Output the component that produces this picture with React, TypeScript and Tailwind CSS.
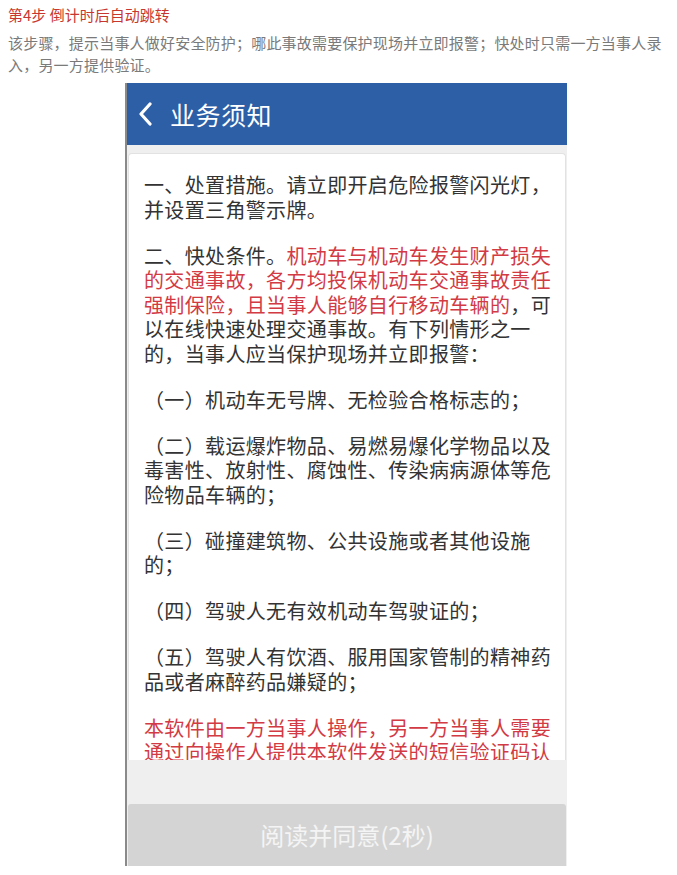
const cjk = { fontFamily: '"Noto Sans CJK SC", "Noto Sans", sans-serif' };

function Line({ children, red }: { children: React.ReactNode; red?: boolean }) {
  return <span className={red ? "text-[#d23a44]" : ""}>{children}</span>;
}

function Para({ lines }: { lines: React.ReactNode[] }) {
  return (
    <div className="mb-[21.5px]">
      {lines.map((l, i) => (
        <div key={i} className="whitespace-nowrap">
          {l}
        </div>
      ))}
    </div>
  );
}

export default function App() {
  return (
    <div className="min-h-[875px] w-[677px] bg-white" style={cjk}>
      <div className="px-2 pt-[4px]">
        <div className="text-[15px] leading-[22px] text-[#c8372f]">第4步 倒计时后自动跳转</div>
        <p className="mt-[6px] whitespace-nowrap text-[15px] leading-[22px] tracking-[0.2px] text-[#7a7a7a]">
          该步骤，提示当事人做好安全防护；哪此事故需要保护现场并立即报警；快处时只需一方当事人录
          <br />
          入，另一方提供验证。
        </p>
      </div>

      <div className="ml-[125px] mt-[7px] flex h-[783px] w-[442px] flex-col border-l-2 border-[#8a8a8a] bg-[#efefef]">
        <div className="flex h-[62px] shrink-0 items-center bg-[#2d5fa7] text-white">
          <svg width="16" height="24" viewBox="0 0 16 24" className="ml-[10px]">
            <path d="M13 2 L4 12 L13 22" fill="none" stroke="white" strokeWidth="3.2" strokeLinecap="round" strokeLinejoin="round" />
          </svg>
          <span className="ml-[17px] text-[25px] leading-none tracking-[0.5px]">业务须知</span>
        </div>

        <div className="mx-[1px] mt-[8px] h-[607px] shrink-0 overflow-hidden rounded-t-[4px] border border-b-0 border-[#e2e2e2] bg-white px-[15px] pt-[19px] text-[20px] leading-[24.5px] text-[#333333] tracking-[0.35px]">
          <Para lines={["一、处置措施。请立即开启危险报警闪光灯，", "并设置三角警示牌。"]} />
          <Para
            lines={[
              <>
                二、快处条件。<Line red>机动车与机动车发生财产损失</Line>
              </>,
              <Line red>的交通事故，各方均投保机动车交通事故责任</Line>,
              <>
                <Line red>强制保险，且当事人能够自行移动车辆的</Line>，可
              </>,
              "以在线快速处理交通事故。有下列情形之一",
              "的，当事人应当保护现场并立即报警：",
            ]}
          />
          <Para lines={["（一）机动车无号牌、无检验合格标志的；"]} />
          <Para
            lines={[
              "（二）载运爆炸物品、易燃易爆化学物品以及",
              "毒害性、放射性、腐蚀性、传染病病源体等危",
              "险物品车辆的；",
            ]}
          />
          <Para lines={["（三）碰撞建筑物、公共设施或者其他设施", "的；"]} />
          <Para lines={["（四）驾驶人无有效机动车驾驶证的；"]} />
          <Para lines={["（五）驾驶人有饮酒、服用国家管制的精神药", "品或者麻醉药品嫌疑的；"]} />
          <Para
            lines={[
              <Line red>本软件由一方当事人操作，另一方当事人需要</Line>,
              <Line red>通过向操作人提供本软件发送的短信验证码认</Line>,
              <Line red>证身份，并在事故现场签名确认。</Line>,
            ]}
          />
        </div>

        <div className="flex-1" />

        <div className="mx-[1px] flex h-[62px] shrink-0 items-center justify-center rounded-t-[3px] bg-[#d4d4d4] text-[24px] text-[#f4f4f4]">
          阅读并同意(2秒)
        </div>
      </div>
    </div>
  );
}
